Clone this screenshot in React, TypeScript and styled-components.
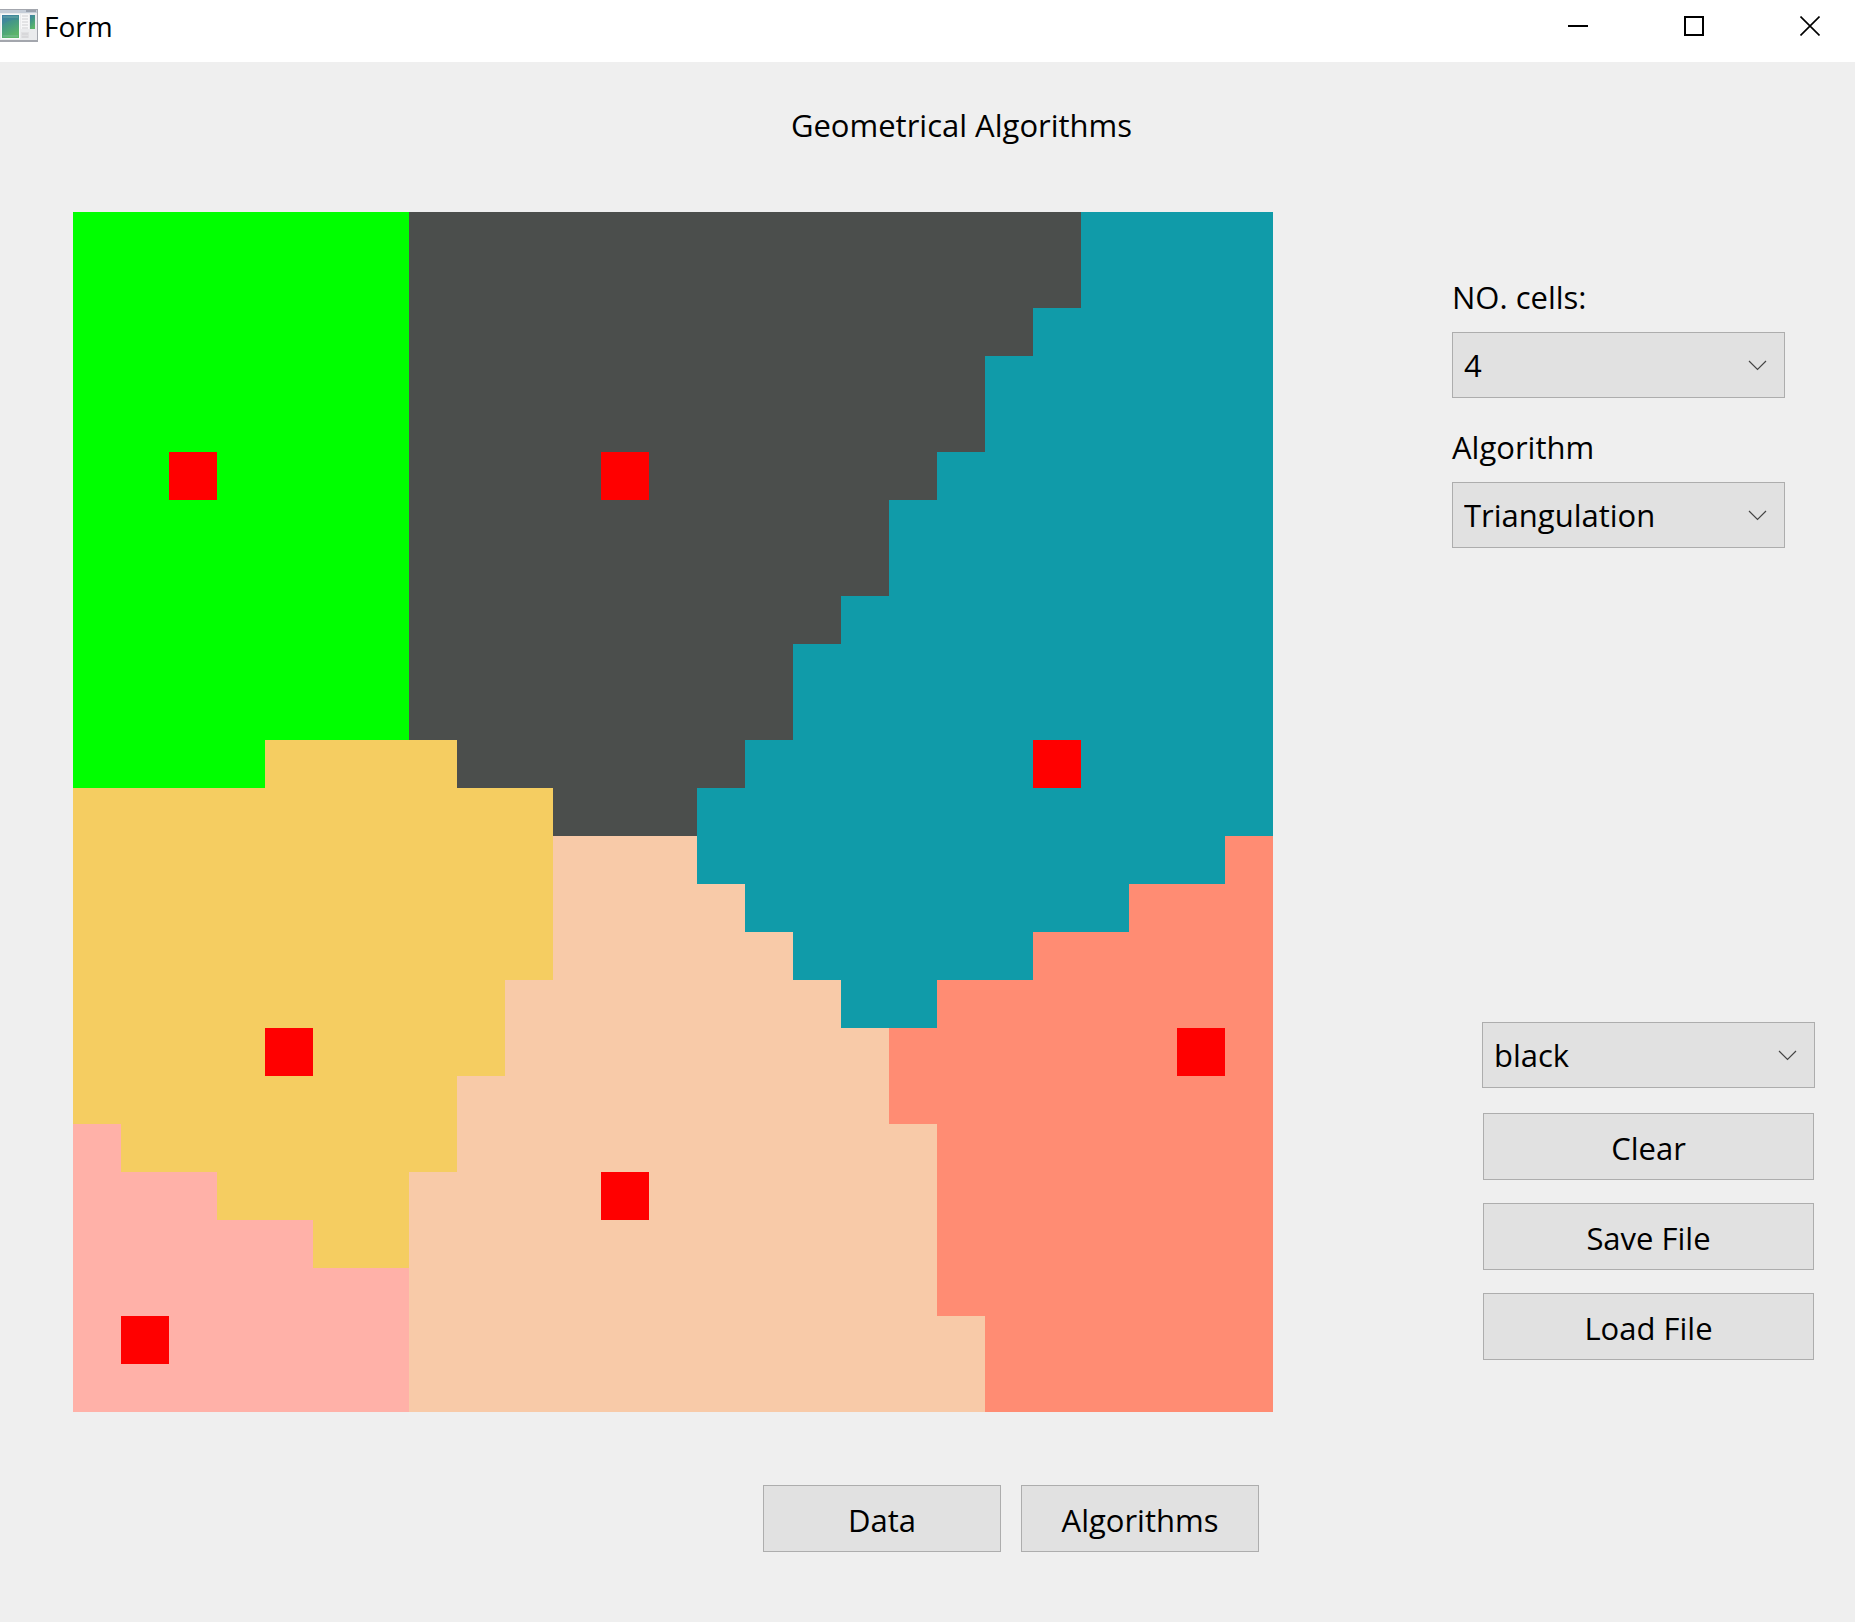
import React, { useState } from "react";
import styled, { createGlobalStyle } from "styled-components";

const GlobalStyle = createGlobalStyle`
  * { box-sizing: border-box; }
  body { margin: 0; background: #efefef; color: #000; font-family: "Open Sans", "Noto Sans", sans-serif; }
`;

const Window = styled.div`
  display: flex;
  flex-direction: column;
  min-height: 100vh;
`;

const TitleBar = styled.header`
  display: flex;
  justify-content: space-between;
  height: 62px;
  background: #fff;
`;

const Caption = styled.div`
  display: flex;
  align-items: center;
  gap: 5px;
  height: 52px;
  font-size: 28px;
  line-height: 40px;
`;

const WindowControls = styled.div`
  display: flex;
  gap: 26px;
  height: 52px;
`;

const ControlButton = styled.button`
  display: flex;
  align-items: center;
  justify-content: center;
  width: 90px;
  padding: 0;
  border: 0;
  background: transparent;
`;

const Heading = styled.h1`
  margin: 0;
  padding: 43px 0 67px 68px;
  font-size: 31px;
  font-weight: 400;
  line-height: 40px;
  text-align: center;
`;

const Workspace = styled.main`
  display: grid;
  grid-template-columns: minmax(0, 1200px) 363px;
  justify-content: space-between;
  column-gap: 40px;
  row-gap: 73px;
  padding: 0 40px 70px 73px;
`;

const Board = styled.svg`
  display: block;
  width: 100%;
  height: auto;
`;

const Sidebar = styled.aside`
  display: flex;
  flex-direction: column;
  justify-content: space-between;
  padding: 65px 0 52px;
`;

const Settings = styled.div`
  display: flex;
  flex-direction: column;
  gap: 29px;
  width: 333px;
`;

const Field = styled.div`
  display: flex;
  flex-direction: column;
  gap: 15px;
`;

const Label = styled.label`
  font-size: 31px;
  line-height: 40px;
`;

const Actions = styled.div`
  display: flex;
  flex-direction: column;
  align-self: flex-end;
  gap: 25px;
  width: 333px;
`;

const ButtonStack = styled.div`
  display: flex;
  flex-direction: column;
  gap: 23px;
  padding: 0 1px;
`;

const SelectBox = styled.div`
  position: relative;
`;

const Select = styled.select`
  display: block;
  width: 100%;
  height: 66px;
  padding: 0 44px 0 11px;
  border: 1px solid #adadad;
  border-radius: 0;
  appearance: none;
  background: #e1e1e1;
  color: #000;
  font-family: inherit;
  font-size: 31px;
`;

const Arrow = styled.svg`
  position: absolute;
  top: 28px;
  right: 18px;
  pointer-events: none;
`;

const Button = styled.button<{ $width?: number }>`
  width: ${(p) => (p.$width ? `${p.$width}px` : "auto")};
  height: 67px;
  padding: 2px 0 0;
  border: 1px solid #adadad;
  background: #e1e1e1;
  color: #000;
  font-family: inherit;
  font-size: 31px;
  line-height: 40px;
`;

const ModeBar = styled.nav`
  display: flex;
  justify-content: flex-end;
  gap: 20px;
  padding-right: 14px;
`;

const COLORS: Record<string, string> = {
  green: "#00ff00",
  dark: "#4b4e4c",
  teal: "#109ba9",
  yellow: "#f5cd61",
  peach: "#f8caa8",
  salmon: "#ff8c73",
  pink: "#ffb1a8",
};

type Band = { row: number; span: number; runs: [string, number][] };

// Each run is a colour and the column at which it ends.
const BANDS: Band[] = [
  { row: 0, span: 2, runs: [["green", 7], ["dark", 21], ["teal", 25]] },
  { row: 2, span: 1, runs: [["green", 7], ["dark", 20], ["teal", 25]] },
  { row: 3, span: 2, runs: [["green", 7], ["dark", 19], ["teal", 25]] },
  { row: 5, span: 1, runs: [["green", 7], ["dark", 18], ["teal", 25]] },
  { row: 6, span: 2, runs: [["green", 7], ["dark", 17], ["teal", 25]] },
  { row: 8, span: 1, runs: [["green", 7], ["dark", 16], ["teal", 25]] },
  { row: 9, span: 2, runs: [["green", 7], ["dark", 15], ["teal", 25]] },
  { row: 11, span: 1, runs: [["green", 4], ["yellow", 8], ["dark", 14], ["teal", 25]] },
  { row: 12, span: 1, runs: [["yellow", 10], ["dark", 13], ["teal", 25]] },
  { row: 13, span: 1, runs: [["yellow", 10], ["peach", 13], ["teal", 24], ["salmon", 25]] },
  { row: 14, span: 1, runs: [["yellow", 10], ["peach", 14], ["teal", 22], ["salmon", 25]] },
  { row: 15, span: 1, runs: [["yellow", 10], ["peach", 15], ["teal", 20], ["salmon", 25]] },
  { row: 16, span: 1, runs: [["yellow", 9], ["peach", 16], ["teal", 18], ["salmon", 25]] },
  { row: 17, span: 1, runs: [["yellow", 9], ["peach", 17], ["salmon", 25]] },
  { row: 18, span: 1, runs: [["yellow", 8], ["peach", 17], ["salmon", 25]] },
  { row: 19, span: 1, runs: [["pink", 1], ["yellow", 8], ["peach", 18], ["salmon", 25]] },
  { row: 20, span: 1, runs: [["pink", 3], ["yellow", 7], ["peach", 18], ["salmon", 25]] },
  { row: 21, span: 1, runs: [["pink", 5], ["yellow", 7], ["peach", 18], ["salmon", 25]] },
  { row: 22, span: 1, runs: [["pink", 7], ["peach", 18], ["salmon", 25]] },
  { row: 23, span: 2, runs: [["pink", 7], ["peach", 19], ["salmon", 25]] },
];

const SEEDS: [number, number][] = [[2, 5], [11, 5], [20, 11], [4, 17], [23, 17], [11, 20], [1, 23]];

function VoronoiBoard() {
  return (
    <Board viewBox="0 0 25 25" shapeRendering="crispEdges" role="img" aria-label="Cells">
      {BANDS.map(({ row, span, runs }) =>
        runs.map(([color, end], i) => {
          const start = i === 0 ? 0 : runs[i - 1][1];
          return (
            <rect key={`${row}-${start}`} x={start} y={row} width={end - start} height={span} fill={COLORS[color]} />
          );
        })
      )}
      {SEEDS.map(([x, y]) => (
        <rect key={`${x}-${y}`} x={x} y={y} width="1" height="1" fill="#ff0000" />
      ))}
    </Board>
  );
}

function AppIcon() {
  return (
    <svg width="39" height="34" viewBox="0 0 39 34" aria-hidden="true">
      <defs>
        <linearGradient id="pane" x1="0" y1="0" x2="0.4" y2="1">
          <stop offset="0" stopColor="#3f7fa5" />
          <stop offset="0.5" stopColor="#459a84" />
          <stop offset="1" stopColor="#5cb569" />
        </linearGradient>
      </defs>
      <rect x="0" y="0" width="38" height="33" fill="#a3a6ad" />
      <rect x="0" y="1" width="37" height="30" fill="#eaebed" />
      <rect x="0" y="1" width="37" height="3" fill="#c5cdd8" />
      <rect x="26" y="1" width="10" height="2" fill="#9ba3af" />
      <rect x="1" y="5" width="19" height="25" fill="#f8fafa" />
      <rect x="2" y="6" width="17" height="23" fill="url(#pane)" />
      <path d="M2 16Q9 10 19 11V6H2z" fill="#3b7ea6" opacity="0.35" />
      <path d="M3 8h15M3 27h15" stroke="#8fc4b4" strokeWidth="1" opacity="0.6" />
      <rect x="21" y="5" width="8" height="15" fill="#f7f7f8" />
      <rect x="21" y="23" width="8" height="6" fill="#e0e0e2" />
      <path d="M22 7h6M22 10h6M22 13h6M22 16h6M22 19h6M22 25h6M22 28h6" stroke="#cfcfd2" strokeWidth="1" />
      <rect x="30" y="6" width="5" height="14" fill="url(#pane)" />
    </svg>
  );
}

function Combo({ id, options, ...rest }: { id: string; options: string[]; "aria-label"?: string }) {
  const [value, setValue] = useState(options[0]);
  return (
    <SelectBox>
      <Select id={id} value={value} onChange={(e) => setValue(e.target.value)} {...rest}>
        {options.map((o) => (
          <option key={o}>{o}</option>
        ))}
      </Select>
      <Arrow width="19" height="11" viewBox="0 0 19 11" fill="none" stroke="#444" strokeWidth="1.2" aria-hidden="true">
        <path d="M1 1l8.5 8.5L18 1" />
      </Arrow>
    </SelectBox>
  );
}

export default function App() {
  return (
    <Window>
      <GlobalStyle />
      <TitleBar>
        <Caption>
          <AppIcon />
          <span>Form</span>
        </Caption>
        <WindowControls>
          <ControlButton aria-label="Minimize">
            <svg width="20" height="20" viewBox="0 0 20 20" stroke="#000" strokeWidth="2">
              <path d="M0 10h20" />
            </svg>
          </ControlButton>
          <ControlButton aria-label="Maximize">
            <svg width="20" height="20" viewBox="0 0 20 20" fill="none" stroke="#000" strokeWidth="2">
              <rect x="1" y="1" width="18" height="18" />
            </svg>
          </ControlButton>
          <ControlButton aria-label="Close">
            <svg width="20" height="20" viewBox="0 0 20 20" stroke="#000" strokeWidth="1.6">
              <path d="M0.500 0.500l19 19M19.500 0.500l-19 19" />
            </svg>
          </ControlButton>
        </WindowControls>
      </TitleBar>
      <Heading>Geometrical Algorithms</Heading>
      <Workspace>
        <VoronoiBoard />
        <Sidebar>
          <Settings>
            <Field>
              <Label htmlFor="cells">NO. cells:</Label>
              <Combo id="cells" options={["4"]} />
            </Field>
            <Field>
              <Label htmlFor="algorithm">Algorithm</Label>
              <Combo id="algorithm" options={["Triangulation"]} />
            </Field>
          </Settings>
          <Actions>
            <Combo id="color" options={["black"]} aria-label="Color" />
            <ButtonStack>
              <Button>Clear</Button>
              <Button>Save File</Button>
              <Button>Load File</Button>
            </ButtonStack>
          </Actions>
        </Sidebar>
        <ModeBar>
          <Button $width={238}>Data</Button>
          <Button $width={238}>Algorithms</Button>
        </ModeBar>
      </Workspace>
    </Window>
  );
}
